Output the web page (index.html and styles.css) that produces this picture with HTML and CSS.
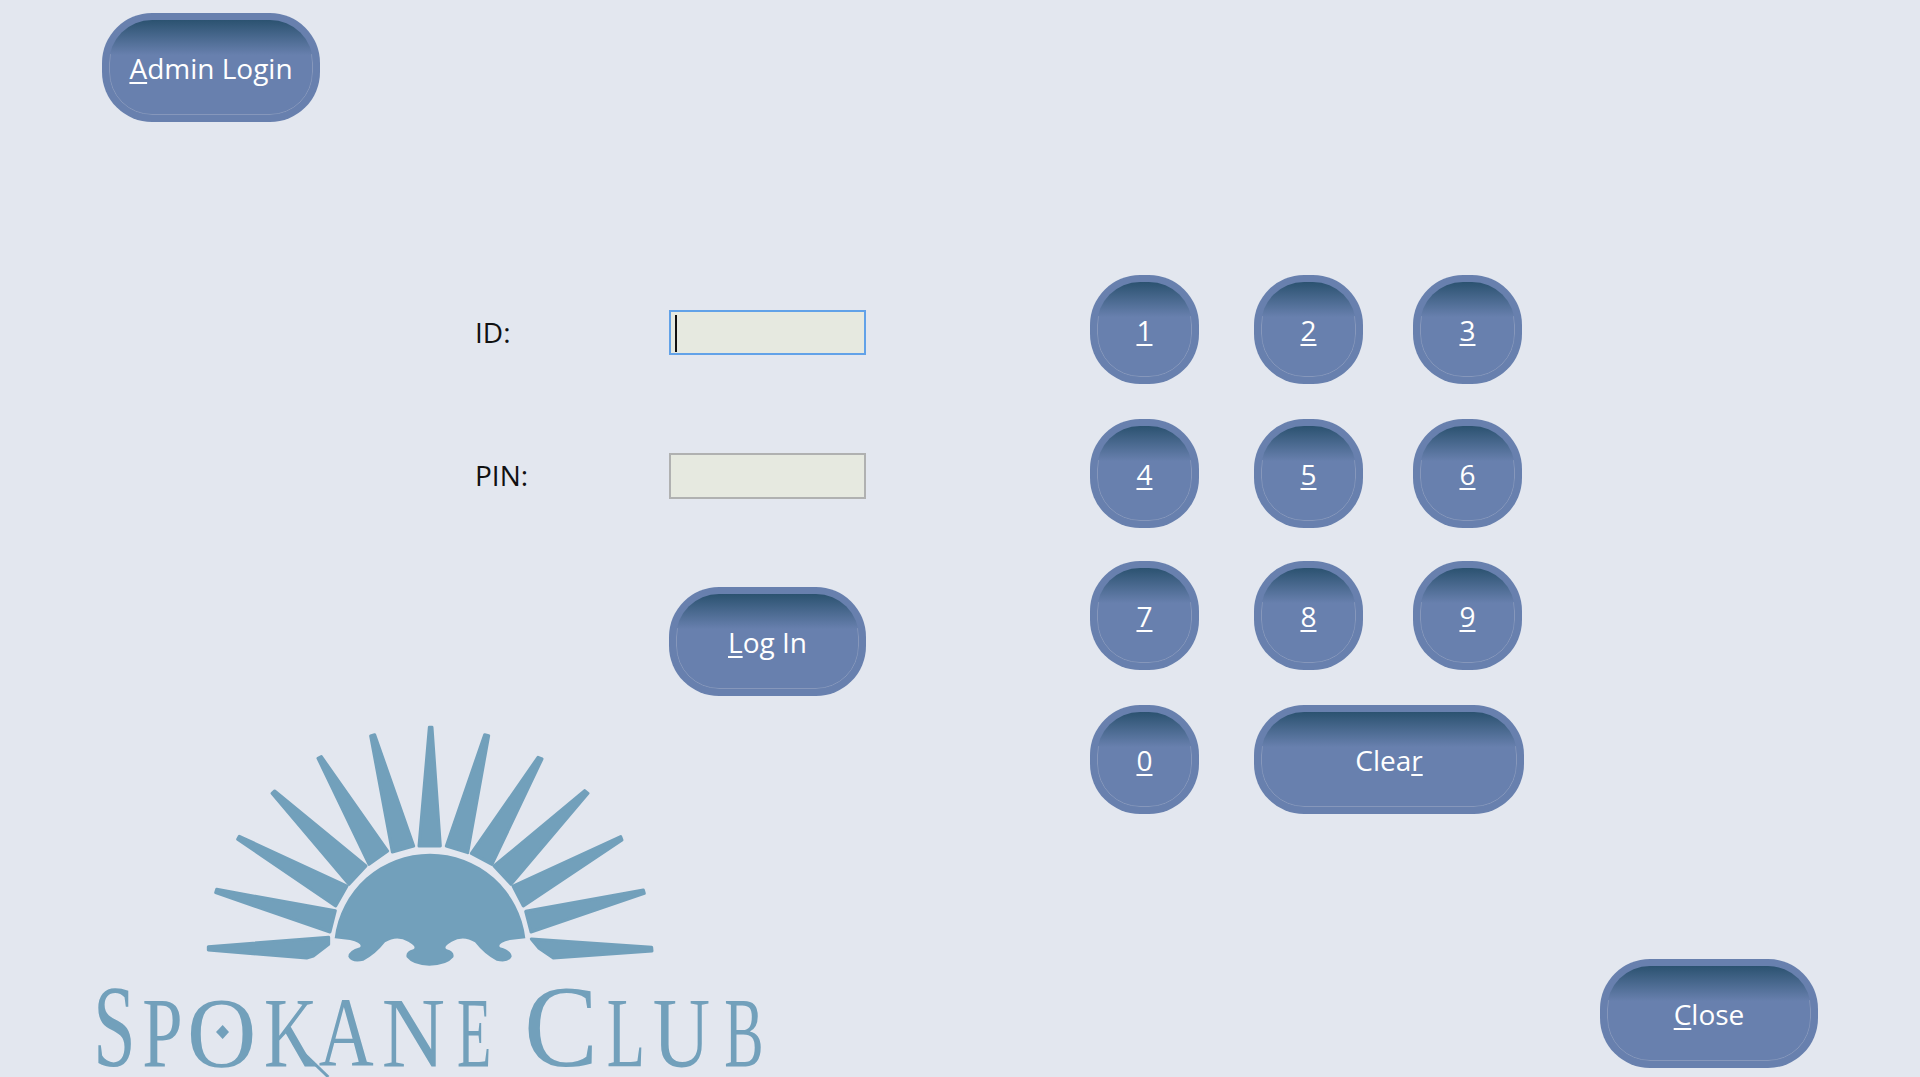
FILE: index.html
```html
<!DOCTYPE html>
<html lang="en">
<head>
<meta charset="utf-8">
<title>Spokane Club Login</title>
<link rel="stylesheet" href="styles.css">
</head>
<body>
<div class="page">
  <div class="left">
    <button class="btn btn-wide admin"><span><u>A</u>dmin Login</span></button>
    <div class="form">
      <label class="label">ID:</label>
      <div class="field field-focus"><i class="caret"></i></div>
      <label class="label">PIN:</label>
      <div class="field field-pin"></div>
      <button class="btn login"><span><u>L</u>og In</span></button>
    </div>
    <svg class="logo" width="720" height="367" viewBox="0 0 2160 1101" role="img" aria-label="Spokane Club logo">
      <g class="rays">
        <polygon points="1048,52 1056,52 1081,408 1017,408"/>
        <polygon points="872,78 884,74 1001,408 937,426"/>
        <polygon points="714,145 724,140 923,423 867,463"/>
        <polygon points="576,250 584,243 858,468 807,523"/>
        <polygon points="473,388 478,379 801,528 767,588"/>
        <polygon points="407,548 410,538 766,602 750,666"/>
        <polygon points="385,720 385,710 746,682 746,703 700,738 680,744"/>
        <polygon points="1099,408 1214,74 1226,77 1163,428"/>
        <polygon points="1174,430 1374,142 1386,147 1236,463"/>
        <polygon points="1242,468 1514,242 1524,250 1293,523"/>
        <polygon points="1299,528 1622,380 1626,390 1330,588"/>
        <polygon points="1337,604 1690,540 1693,550 1353,666"/>
        <polygon points="1354,687 1715,712 1716,723 1420,744 1377,715"/>
      </g>
      <path class="sun" d="M765 685L810 690Q850 700 840 712Q805 722 805 740Q815 760 850 752Q885 735 915 697Q950 675 985 695Q1012 710 1000 718Q975 725 980 742Q1000 767 1048 767Q1100 767 1120 742Q1125 725 1100 718Q1088 710 1115 695Q1150 675 1185 697Q1215 735 1250 752Q1285 760 1295 740Q1295 722 1260 712Q1250 700 1290 690L1336 685A288 288 0 0 0 764 685Z"/>
      <text class="wordmark" y="1068"><tspan class="cap" x="40" textLength="127" lengthAdjust="spacingAndGlyphs">S</tspan><tspan class="small" x="187" textLength="121" lengthAdjust="spacingAndGlyphs">P</tspan><tspan class="small" x="321" textLength="208" lengthAdjust="spacingAndGlyphs">O</tspan><tspan class="small" x="552" textLength="160" lengthAdjust="spacingAndGlyphs">K</tspan><tspan class="small" x="716" textLength="165" lengthAdjust="spacingAndGlyphs">A</tspan><tspan class="small" x="905" textLength="190" lengthAdjust="spacingAndGlyphs">N</tspan><tspan class="small" x="1131" textLength="103" lengthAdjust="spacingAndGlyphs">E</tspan> <tspan class="cap" x="1332" textLength="222" lengthAdjust="spacingAndGlyphs">C</tspan><tspan class="small" x="1580" textLength="115" lengthAdjust="spacingAndGlyphs">L</tspan><tspan class="small" x="1718" textLength="172" lengthAdjust="spacingAndGlyphs">U</tspan><tspan class="small" x="1933" textLength="118" lengthAdjust="spacingAndGlyphs">B</tspan></text>
      <polygon class="sun" points="428,945 447,966 428,987 408,966"/>
      <path class="kleg" d="M640 1000L745 1101"/>
    </svg>
  </div>
  <div class="right">
    <div class="keypad">
      <button class="btn key"><span><u>1</u></span></button>
      <button class="btn key"><span><u>2</u></span></button>
      <button class="btn key"><span><u>3</u></span></button>
      <button class="btn key"><span><u>4</u></span></button>
      <button class="btn key"><span><u>5</u></span></button>
      <button class="btn key"><span><u>6</u></span></button>
      <button class="btn key"><span><u>7</u></span></button>
      <button class="btn key"><span><u>8</u></span></button>
      <button class="btn key"><span><u>9</u></span></button>
      <button class="btn key"><span><u>0</u></span></button>
      <button class="btn clear"><span>Clea<u>r</u></span></button>
    </div>
    <button class="btn btn-wide close"><span><u>C</u>lose</span></button>
  </div>
</div>
</body>
</html>
```
FILE: styles.css
```css
* { box-sizing: border-box; }
html, body { margin: 0; height: 100%; }
body {
  background: #e3e7ef;
  font-family: "Open Sans", "Noto Sans", sans-serif;
  overflow: hidden;
}
.page {
  display: grid;
  grid-template-columns: 1090px 830px;
  height: 1077px;
  overflow: hidden;
}
.left, .right { display: flex; flex-direction: column; }

.btn {
  position: relative;
  display: block;
  height: 109px;
  padding: 0;
  border: 0;
  border-radius: 50px;
  background: #6880ae;
  color: #fff;
  font: 400 28px/1 "Open Sans", "Noto Sans", sans-serif;
}
.btn::before {
  content: "";
  position: absolute;
  inset: 7px;
  border-radius: 43px;
  background: linear-gradient(#2b5270 0, #6880ae 37%, #6880ae 100%);
}
.btn::after {
  content: "";
  position: absolute;
  inset: 7px;
  border-radius: 43px;
  border: 1px solid #8697bb;
  -webkit-mask-image: linear-gradient(transparent 36%, #000 36%);
  mask-image: linear-gradient(transparent 36%, #000 36%);
}
.btn span {
  position: relative;
  z-index: 1;
}
.btn u { text-underline-offset: 3px; text-decoration-thickness: 2px; }
.btn-wide { width: 218px; }

.admin { margin: 13px 0 0 102px; }

.form {
  display: grid;
  grid-template-columns: 194px 197px;
  grid-template-rows: 143px 134px 109px;
  align-items: start;
  margin: 188px 0 0 475px;
}
.form .login { grid-column: 2; width: 197px; }
.label { font-size: 28px; line-height: 44px; color: #111; }
.field {
  height: 45px;
  background: #e6e9e0;
  border: 2px solid #b0b1b1;
  padding: 3px 4px;
}
.field-pin { height: 46px; }
.field-focus { border-color: #62a2e8; }
.caret { display: block; width: 2px; height: 37px; background: #111; }

.logo { display: block; margin: 14px 0 0 80px; flex: none; }
.sun { fill: #72a0bb; }
.rays { fill: #72a0bb; stroke: #72a0bb; stroke-width: 9; stroke-linejoin: round; }
.wordmark { fill: #72a0bb; font-family: "Liberation Serif", serif; white-space: pre; }
.cap { font-size: 350px; }
.small { font-size: 296px; }
.kleg { stroke: #72a0bb; stroke-width: 9; fill: none; }

.keypad {
  display: grid;
  grid-template-columns: 164px 159px 111px;
  grid-template-rows: 144px 142px 144px 109px;
  margin-top: 275px;
}
.key { width: 109px; }
.clear { grid-column: 2 / span 2; width: 270px; }
.close { align-self: flex-end; margin: 145px 102px 0 0; }
```
